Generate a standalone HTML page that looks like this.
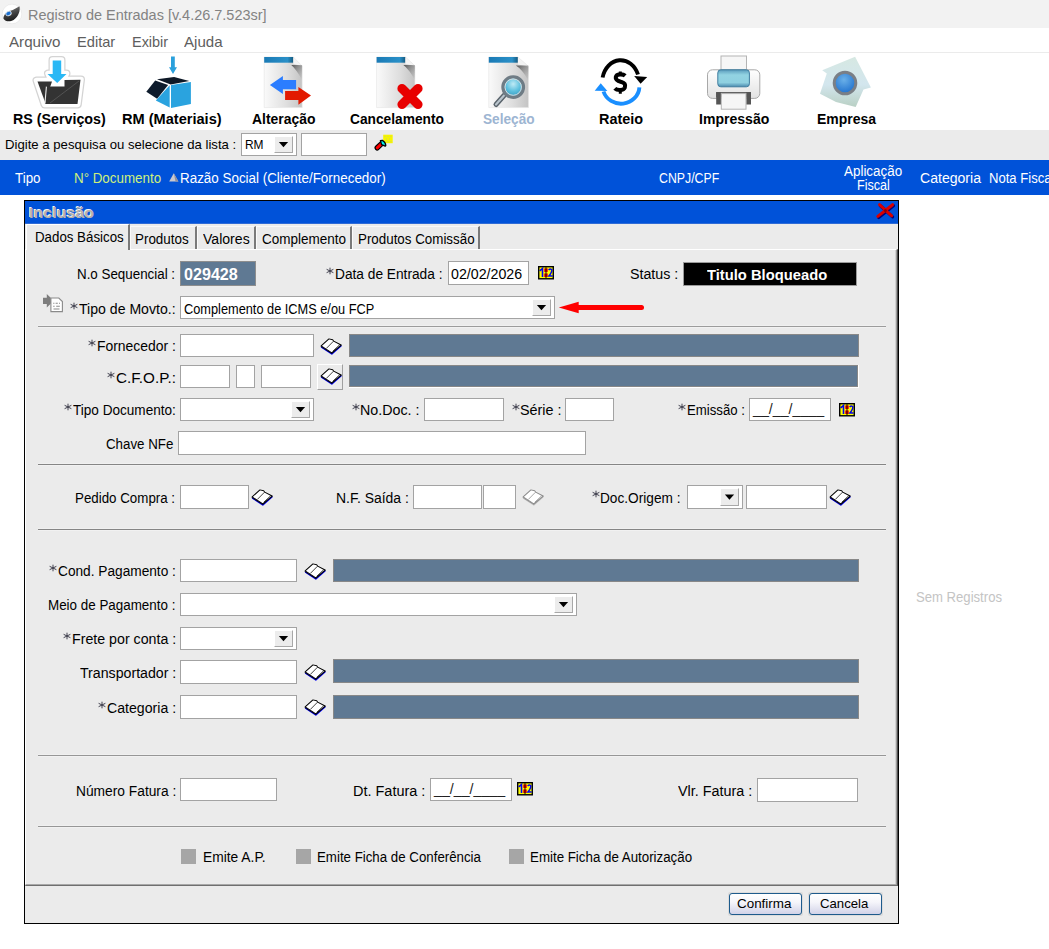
<!DOCTYPE html>
<html><head><meta charset="utf-8"><style>
html,body{margin:0;padding:0;}
body{width:1049px;height:949px;overflow:hidden;position:relative;background:#fff;font-family:'Liberation Sans', sans-serif;}
.t{position:absolute;white-space:nowrap;font-family:'Liberation Sans', sans-serif;}
svg{overflow:visible}
</style></head><body>
<div style="position:absolute;left:0px;top:0px;width:1049px;height:28px;background:#f2f2f2"></div>
<svg style="position:absolute;left:0px;top:0px" width="28" height="28" viewBox="0 0 28 28">
<defs><linearGradient id="sw" x1="0" y1="0" x2="0.3" y2="1"><stop offset="0" stop-color="#8a8a8a"/><stop offset="0.5" stop-color="#4a4a4a"/><stop offset="1" stop-color="#1e1e1e"/></linearGradient></defs>
<circle cx="12" cy="14" r="9.8" fill="#fff" stroke="#e4e4e4" stroke-width="0.6"/>
<path d="M3.4 18.4 C3.6 14.6 6.8 11.2 10.4 10.7 C13.6 10.1 16.6 7.6 19.4 6.3 C20.6 10.2 18.6 16.6 13.6 19.9 C10 22.1 5.4 21.9 3.4 18.4 Z" fill="url(#sw)"/>
<ellipse cx="8.5" cy="13.5" rx="2.8" ry="2.1" transform="rotate(-25 8.5 13.5)" fill="#1a6fd0" stroke="#dfe8f0" stroke-width="0.9"/>
</svg>
<div id="t0" class="t" style="left:27.93px;top:8.21px;font-size:14.5px;line-height:14.5px;font-weight:400;color:#838383;transform:scaleX(0.9976);transform-origin:0 0;">Registro de Entradas [v.4.26.7.523sr]</div>
<div style="position:absolute;left:0px;top:28px;width:1049px;height:24px;background:#fff"></div>
<div id="t1" class="t" style="left:8.73px;top:34.71px;font-size:14.5px;line-height:14.5px;font-weight:400;color:#5e5e5e;transform:scaleX(1.0461);transform-origin:0 0;">Arquivo</div>
<div id="t2" class="t" style="left:77.43px;top:34.71px;font-size:14.5px;line-height:14.5px;font-weight:400;color:#5e5e5e;transform:scaleX(1.0092);transform-origin:0 0;">Editar</div>
<div id="t3" class="t" style="left:132.13px;top:34.71px;font-size:14.5px;line-height:14.5px;font-weight:400;color:#5e5e5e;transform:scaleX(0.9965);transform-origin:0 0;">Exibir</div>
<div id="t4" class="t" style="left:184.43px;top:34.71px;font-size:14.5px;line-height:14.5px;font-weight:400;color:#5e5e5e;transform:scaleX(1.0390);transform-origin:0 0;">Ajuda</div>
<div style="position:absolute;left:0px;top:52px;width:1049px;height:1px;background:#ebebeb"></div>
<div style="position:absolute;left:0px;top:53px;width:1049px;height:1px;background:#f5f5f5"></div>
<div style="position:absolute;left:0px;top:53px;width:1049px;height:77px;background:#fff"></div>
<div id="t5" class="t" style="left:13.14px;top:112.01px;font-size:14.3px;line-height:14.3px;font-weight:700;color:#000;transform:scaleX(0.9973);transform-origin:0 0;">RS (Serviços)</div>
<div id="t6" class="t" style="left:122.04px;top:112.01px;font-size:14.3px;line-height:14.3px;font-weight:700;color:#000;transform:scaleX(1.0194);transform-origin:0 0;">RM (Materiais)</div>
<div id="t7" class="t" style="left:251.94px;top:112.01px;font-size:14.3px;line-height:14.3px;font-weight:700;color:#000;transform:scaleX(0.9746);transform-origin:0 0;">Alteração</div>
<div id="t8" class="t" style="left:349.74px;top:112.01px;font-size:14.3px;line-height:14.3px;font-weight:700;color:#000;transform:scaleX(0.9609);transform-origin:0 0;">Cancelamento</div>
<div id="t9" class="t" style="left:482.84px;top:112.01px;font-size:14.3px;line-height:14.3px;font-weight:700;color:#9db5d2;transform:scaleX(0.9550);transform-origin:0 0;">Seleção</div>
<div id="t10" class="t" style="left:599.04px;top:112.01px;font-size:14.3px;line-height:14.3px;font-weight:700;color:#000;transform:scaleX(1.0094);transform-origin:0 0;">Rateio</div>
<div id="t11" class="t" style="left:698.84px;top:112.01px;font-size:14.3px;line-height:14.3px;font-weight:700;color:#000;transform:scaleX(0.9830);transform-origin:0 0;">Impressão</div>
<div id="t12" class="t" style="left:816.84px;top:112.01px;font-size:14.3px;line-height:14.3px;font-weight:700;color:#000;transform:scaleX(0.9770);transform-origin:0 0;">Empresa</div>
<svg style="position:absolute;left:28px;top:52px" width="64" height="60" viewBox="0 0 64 60">
<path d="M8.5 28.5 L23 28.5 L20 21.5 L24.5 21.5 L24.5 8 L33.5 8 L33.5 21.5 L38.5 21.5 L35.5 27.5 L53 27.5 L49.8 52.5 L16.5 52.5 Z" fill="#fff" stroke="#d4d4d4" stroke-width="8" stroke-linejoin="round"/>
<path d="M8.5 28.5 L23 28.5 L20 21.5 L24.5 21.5 L24.5 8 L33.5 8 L33.5 21.5 L38.5 21.5 L35.5 27.5 L53 27.5 L49.8 52.5 L16.5 52.5 Z" fill="#fff" stroke="#fff" stroke-width="5.5" stroke-linejoin="round"/>
<polygon points="9.5,29.6 24,29.6 17,50" fill="#333"/>
<polygon points="18.3,34.5 36.5,34.5 36.5,28 52.5,27.8 49.5,52 17,52" fill="#333"/>
<line x1="18.4" y1="34.6" x2="16.9" y2="51.8" stroke="#eee" stroke-width="1.1"/>
<line x1="22" y1="51" x2="51" y2="29" stroke="#5a5a5a" stroke-width="0.8"/>
<polygon points="24.7,8.5 33.2,8.5 33.2,22 38.5,22 29.2,31 19.5,22 24.7,22" fill="#2ab8f5" stroke="#fff" stroke-width="3.2" stroke-linejoin="round"/>
<polygon points="24.7,8.5 33.2,8.5 33.2,22 38.5,22 29.2,31 19.5,22 24.7,22" fill="#2ab8f5"/>
</svg>
<svg style="position:absolute;left:140px;top:52px" width="60" height="60" viewBox="0 0 60 60">
<polygon points="31,4.4 34.8,4.4 34.8,15.2 37,15.2 33,22 29,15.2 31,15.2" fill="#2aa0dc"/>
<polygon points="17,27.2 34.1,25 49.3,29.1 30.7,32.6" fill="#0d1826"/>
<polygon points="6.3,39.8 15.2,28.4 28.1,32.9 17.1,46.8" fill="#0d1b2c"/>
<polygon points="15.8,48.4 29.7,33.2 29.7,55.6" fill="#2aa3df"/>
<polygon points="31,32.9 50.9,30 50.9,52.1 31,55.9" fill="#2aa3df"/>
</svg>
<svg style="position:absolute;left:256px;top:52px" width="60" height="60" viewBox="0 0 60 60">
<defs><linearGradient id="dg82" x1="0" x2="1" y1="0" y2="0"><stop offset="0" stop-color="#fafafa"/><stop offset="0.6" stop-color="#dedede"/><stop offset="1" stop-color="#c4c4c4"/></linearGradient>
<linearGradient id="bg82" x1="0" x2="1"><stop offset="0" stop-color="#1a7ab5"/><stop offset="0.8" stop-color="#2a90c8"/><stop offset="1" stop-color="#155a80"/></linearGradient></defs>
<path d="M8.2 5 L37.3 5 L46.1 14 L46.1 55.6 L8.2 55.6 Z" fill="url(#dg82)" stroke="#e2e2e2" stroke-width="0.6"/>
<rect x="8.2" y="5" width="29.099999999999998" height="5.7" fill="url(#bg82)"/>
<path d="M37.3 5 L46.1 14 L37.3 12 Z" fill="#f4f4f4"/>
<defs><linearGradient id="fs82" x1="0" y1="0" x2="1" y2="1"><stop offset="0" stop-color="#444" stop-opacity="0.9"/><stop offset="1" stop-color="#888" stop-opacity="0"/></linearGradient></defs>
<path d="M35.3 13 L46.1 13 L46.1 28 Q40.1 17 35.3 13 Z" fill="url(#fs82)"/>

<polygon points="13.9,32.9 26.9,24 26.9,28.1 40.1,28.1 40.1,37.3 26.9,37.3 26.9,42" fill="#2b7dff"/>
<polygon points="29.1,38.9 42.4,38.9 42.4,35.1 55,43.6 42.4,52.8 42.4,48 29.1,48" fill="#e21a00"/>
</svg>
<svg style="position:absolute;left:370px;top:52px" width="60" height="60" viewBox="0 0 60 60">
<defs><linearGradient id="dg66" x1="0" x2="1" y1="0" y2="0"><stop offset="0" stop-color="#fafafa"/><stop offset="0.6" stop-color="#dedede"/><stop offset="1" stop-color="#c4c4c4"/></linearGradient>
<linearGradient id="bg66" x1="0" x2="1"><stop offset="0" stop-color="#1a7ab5"/><stop offset="0.8" stop-color="#2a90c8"/><stop offset="1" stop-color="#155a80"/></linearGradient></defs>
<path d="M6.6 5 L35.4 5 L44.9 14 L44.9 55.6 L6.6 55.6 Z" fill="url(#dg66)" stroke="#e2e2e2" stroke-width="0.6"/>
<rect x="6.6" y="5" width="28.799999999999997" height="5.7" fill="url(#bg66)"/>
<path d="M35.4 5 L44.9 14 L35.4 12 Z" fill="#f4f4f4"/>
<defs><linearGradient id="fs66" x1="0" y1="0" x2="1" y2="1"><stop offset="0" stop-color="#444" stop-opacity="0.9"/><stop offset="1" stop-color="#888" stop-opacity="0"/></linearGradient></defs>
<path d="M33.4 13 L44.9 13 L44.9 28 Q38.9 17 33.4 13 Z" fill="url(#fs66)"/>

<path d="M32 36.6 L48 52.4 M48 36.6 L32 52.4" stroke="#e80000" stroke-width="9.2" stroke-linecap="round"/>
</svg>
<svg style="position:absolute;left:480px;top:52px" width="60" height="60" viewBox="0 0 60 60">
<defs><linearGradient id="dg88" x1="0" x2="1" y1="0" y2="0"><stop offset="0" stop-color="#fafafa"/><stop offset="0.6" stop-color="#dedede"/><stop offset="1" stop-color="#c4c4c4"/></linearGradient>
<linearGradient id="bg88" x1="0" x2="1"><stop offset="0" stop-color="#1a7ab5"/><stop offset="0.8" stop-color="#2a90c8"/><stop offset="1" stop-color="#155a80"/></linearGradient></defs>
<path d="M8.8 5 L37.9 5 L48.4 14.5 L48.4 55.6 L8.8 55.6 Z" fill="url(#dg88)" stroke="#e2e2e2" stroke-width="0.6"/>
<rect x="8.8" y="5" width="29.099999999999998" height="5.7" fill="url(#bg88)"/>
<path d="M37.9 5 L48.4 14.5 L37.9 12.5 Z" fill="#f4f4f4"/>
<defs><linearGradient id="fs88" x1="0" y1="0" x2="1" y2="1"><stop offset="0" stop-color="#444" stop-opacity="0.9"/><stop offset="1" stop-color="#888" stop-opacity="0"/></linearGradient></defs>
<path d="M35.9 13.5 L48.4 13.5 L48.4 28.5 Q42.4 17.5 35.9 13.5 Z" fill="url(#fs88)"/>

<defs><radialGradient id="lens" cx="0.5" cy="0.35" r="0.7"><stop offset="0" stop-color="#bfeaf5"/><stop offset="0.5" stop-color="#5cc0de"/><stop offset="1" stop-color="#2f8fb5"/></radialGradient></defs>
<line x1="24" y1="43.5" x2="16" y2="52.5" stroke="#59636b" stroke-width="5" stroke-linecap="round"/>
<line x1="24" y1="43.5" x2="16" y2="52.5" stroke="#b9c4cc" stroke-width="2.2" stroke-linecap="round"/>
<circle cx="33.2" cy="35.1" r="10.3" fill="url(#lens)" stroke="#6f7c85" stroke-width="3.2"/>
<circle cx="33.2" cy="35.1" r="8.2" fill="none" stroke="#d8dde0" stroke-width="1"/>
</svg>
<svg style="position:absolute;left:590px;top:52px" width="60" height="60" viewBox="0 0 60 60">
<path d="M12.6 25.5 A18.5 22 0 0 1 48 22.5" fill="none" stroke="#000" stroke-width="3.9"/>
<polygon points="44.2,23.9 57.2,25 50.6,31.8" fill="#000"/>
<path d="M49.4 35.3 A18.4 17.5 0 0 1 13.5 39.5" fill="none" stroke="#1a8fff" stroke-width="3.9"/>
<polygon points="4.7,38.7 17.4,38.9 10.7,31.3" fill="#1a8fff"/>
<path d="M35.2 23.8 C33 21.8 26.5 21.6 25.8 25.2 C25.2 28.6 29.5 29.5 31.5 30 C34.5 30.8 35.8 32.5 34.8 35.6 C33.6 38.8 27 38.6 24.8 36.3" fill="none" stroke="#000" stroke-width="4.1"/>
<path d="M30.3 19.6 V23 M30.3 37.5 V41.7" stroke="#000" stroke-width="3"/>
</svg>
<svg style="position:absolute;left:702px;top:52px" width="60" height="60" viewBox="0 0 60 60">
<defs><linearGradient id="pb" x1="0" x2="0" y1="0" y2="1"><stop offset="0" stop-color="#fff"/><stop offset="1" stop-color="#e2e2e2"/></linearGradient>
<linearGradient id="pp" x1="0" x2="0" y1="0" y2="1"><stop offset="0" stop-color="#5a9cbc"/><stop offset="0.3" stop-color="#92d3e2"/><stop offset="0.75" stop-color="#8fd0e0"/><stop offset="1" stop-color="#4a8aae"/></linearGradient></defs>
<rect x="19" y="4" width="25.5" height="15" fill="#f6f6f6" stroke="#b4b4b4" stroke-width="1"/>
<rect x="5.5" y="17.8" width="52.3" height="28.6" rx="5" fill="url(#pb)" stroke="#a8a8a8" stroke-width="1"/>
<rect x="15.8" y="17.8" width="31.6" height="17" rx="3" fill="url(#pp)" stroke="#3f7d9f" stroke-width="1"/>
<rect x="14.2" y="40.1" width="34.8" height="5.2" fill="#555"/>
<rect x="14.2" y="40.1" width="4.8" height="12.4" fill="#555"/>
<rect x="44.2" y="40.1" width="4.8" height="12.4" fill="#555"/>
<rect x="19.3" y="41.6" width="24.7" height="15.6" fill="#f6f6f6" stroke="#b4b4b4" stroke-width="1"/>
</svg>
<svg style="position:absolute;left:814px;top:52px" width="60" height="60" viewBox="0 0 60 60">
<defs><linearGradient id="hs" x1="0" x2="0" y1="0" y2="1"><stop offset="0" stop-color="#d6e8e2"/><stop offset="0.55" stop-color="#d3e6ee"/><stop offset="1" stop-color="#b9d0c4"/></linearGradient>
<radialGradient id="eb" cx="0.45" cy="0.35" r="0.7"><stop offset="0" stop-color="#6ab0e8"/><stop offset="1" stop-color="#1a6ccc"/></radialGradient></defs>
<polygon points="8.2,18.3 41.1,4.7 56.9,35.4 49.5,37.5 41.7,55 22,50 6,41.7 12.8,21.5" fill="url(#hs)"/>
<circle cx="31" cy="31" r="10.8" fill="url(#eb)" stroke="#7a7f86" stroke-width="3"/>
</svg>
<div style="position:absolute;left:0px;top:130px;width:1049px;height:30px;background:#ebebeb"></div>
<div id="t13" class="t" style="left:4.69px;top:137.82px;font-size:13.5px;line-height:13.5px;font-weight:400;color:#000;transform:scaleX(0.9750);transform-origin:0 0;">Digite a pesquisa ou selecione da lista :</div>
<div style="position:absolute;left:241px;top:133px;width:56px;height:23px;background:#fff;border:1px solid #a3a3a3;box-sizing:border-box"></div>
<div style="position:absolute;left:274px;top:136px;width:19px;height:17px;background:#ececec;border-top:1px solid #fff;border-left:1px solid #fff;border-right:1px solid #a8a8a8;border-bottom:1px solid #a8a8a8;box-sizing:border-box"></div>
<svg style="position:absolute;left:274px;top:136px" width="19" height="17" viewBox="0 0 19 17"><polygon points="4.9,5.9 14.1,5.9 9.5,11.3" fill="#000"/></svg>
<div id="t14" class="t" style="left:245.22px;top:138.07px;font-size:13px;line-height:13px;font-weight:400;color:#000;transform:scaleX(0.9180);transform-origin:0 0;">RM</div>
<div style="position:absolute;left:301px;top:133px;width:66px;height:23px;background:#fff;border:1px solid #a3a3a3;box-sizing:border-box"></div>
<svg style="position:absolute;left:370px;top:130px" width="25" height="25" viewBox="0 0 25 25">
<rect x="13.2" y="4.7" width="9.5" height="8.5" fill="#f5f500"/>
<path d="M14.5 6.5 h1 M17.5 6.5 h1 M20.5 6.5 h1 M16 9 h1 M19 9 h1 M14.5 11.5 h1 M17.5 11.5 h1 M20.5 11.5 h1" stroke="#c8c870" stroke-width="0.8"/>
<path d="M7.2 17.8 L11.6 13.6" stroke="#000" stroke-width="5.4" stroke-linecap="round"/>
<path d="M7.2 17.8 L11.6 13.6" stroke="#ff0000" stroke-width="3" stroke-linecap="round"/>
<path d="M10.4 10.6 L12.4 10.3 Q15.6 12.4 15.8 15.6 L15.2 16.2 L11.6 14.6 Z" fill="#00f0f0" stroke="#000" stroke-width="1.3" stroke-linejoin="round"/>
</svg>
<div style="position:absolute;left:0px;top:160px;width:1049px;height:35px;background:#0052d9"></div>
<div id="t15" class="t" style="left:15.36px;top:170.87px;font-size:14px;line-height:14px;font-weight:400;color:#fff;transform:scaleX(0.9536);transform-origin:0 0;">Tipo</div>
<div id="t16" class="t" style="left:73.56px;top:170.87px;font-size:14px;line-height:14px;font-weight:400;color:#cdf07c;transform:scaleX(0.9548);transform-origin:0 0;">N° Documento</div>
<svg style="position:absolute;left:168px;top:171px" width="12" height="12" viewBox="0 0 12 12"><polygon points="1.2,10.6 10.4,10.6 5.8,2.2" fill="#c8c8d0"/><polygon points="5.8,2.2 10.4,10.6 7.5,10.6" fill="#9090a0"/></svg>
<div id="t17" class="t" style="left:180.16px;top:170.87px;font-size:14px;line-height:14px;font-weight:400;color:#fff;transform:scaleX(0.9577);transform-origin:0 0;">Razão Social (Cliente/Fornecedor)</div>
<div id="t18" class="t" style="left:658.66px;top:170.87px;font-size:14px;line-height:14px;font-weight:400;color:#fff;transform:scaleX(0.8791);transform-origin:0 0;">CNPJ/CPF</div>
<div id="t19" class="t" style="left:843.86px;top:163.77px;font-size:14px;line-height:14px;font-weight:400;color:#fff;transform:scaleX(0.9584);transform-origin:0 0;">Aplicação</div>
<div id="t20" class="t" style="left:857.46px;top:177.56px;font-size:14px;line-height:14px;font-weight:400;color:#fff;transform:scaleX(0.8993);transform-origin:0 0;">Fiscal</div>
<div id="t21" class="t" style="left:919.86px;top:170.87px;font-size:14px;line-height:14px;font-weight:400;color:#fff;transform:scaleX(1.0046);transform-origin:0 0;">Categoria</div>
<div id="t22" class="t" style="left:989.16px;top:170.87px;font-size:14px;line-height:14px;font-weight:400;color:#fff;transform:scaleX(0.935);transform-origin:0 0;">Nota Fiscal</div>
<div id="t23" class="t" style="left:915.96px;top:590.37px;font-size:14px;line-height:14px;font-weight:400;color:#c4c4c4;transform:scaleX(0.9365);transform-origin:0 0;">Sem Registros</div>
<div style="position:absolute;left:24px;top:200px;width:875px;height:724px;background:#ebebeb;border:1px solid #000;box-sizing:border-box"></div>
<div style="position:absolute;left:25px;top:201px;width:873px;height:23px;background:#0052d9"></div>
<div style="position:absolute;left:25px;top:223px;width:873px;height:1px;background:#2f6bd6"></div>
<div id="t24" class="t" style="left:28.57px;top:204.51px;font-size:15.5px;line-height:15.5px;font-weight:700;color:#b9b1aa;transform:scaleX(1.0361);transform-origin:0 0;text-shadow:-1px -1px 0 #f4f4f4;">Inclusão</div>
<svg style="position:absolute;left:874px;top:202px" width="22" height="18" viewBox="0 0 22 18">
<path d="M3.8 14.4 L18.6 2.7 M5.5 2.7 L17.7 13.8" stroke="#00007a" stroke-width="3.2" stroke-linecap="round" transform="translate(0.9,1.1)"/>
<path d="M3.8 14.4 L18.6 2.7 M5.5 2.7 L17.7 13.8" stroke="#d80000" stroke-width="3" stroke-linecap="round"/>
<circle cx="11.4" cy="8.6" r="1.6" fill="#900000"/>
</svg>
<div style="position:absolute;left:25px;top:224px;width:873px;height:25px;background:#ebebeb"></div>
<div style="position:absolute;left:25px;top:249px;width:873px;height:637px;background:#ebebeb;border-top:1px solid #fff;border-left:1px solid #fff;border-right:2px solid #505050;border-bottom:2px solid #6f6f6f;box-sizing:border-box"></div>
<div style="position:absolute;left:896px;top:250px;width:1px;height:635px;background:#9a9a9a"></div>
<div style="position:absolute;left:895px;top:250px;width:1px;height:634px;background:#d2d2d2"></div>
<div style="position:absolute;left:26px;top:884px;width:870px;height:1px;background:#a8a8a8"></div>
<div style="position:absolute;left:26px;top:224px;width:104px;height:26px;background:#ebebeb;border-top:1px solid #fff;border-left:1px solid #fff;border-right:2px solid #7a7a7a;box-sizing:border-box"></div>
<div id="t25" class="t" style="left:34.56px;top:229.97px;font-size:14px;line-height:14px;font-weight:400;color:#000;transform:scaleX(0.9496);transform-origin:0 0;">Dados Básicos</div>
<div style="position:absolute;left:130px;top:226px;width:67px;height:23px;background:#ebebeb;border-top:1px solid #f8f8f8;border-left:1px solid #fafafa;border-right:2px solid #7a7a7a;box-sizing:border-box"></div>
<div style="position:absolute;left:197px;top:226px;width:59px;height:23px;background:#ebebeb;border-top:1px solid #f8f8f8;border-left:1px solid #fafafa;border-right:2px solid #7a7a7a;box-sizing:border-box"></div>
<div style="position:absolute;left:256px;top:226px;width:96px;height:23px;background:#ebebeb;border-top:1px solid #f8f8f8;border-left:1px solid #fafafa;border-right:2px solid #7a7a7a;box-sizing:border-box"></div>
<div style="position:absolute;left:352px;top:226px;width:128px;height:23px;background:#ebebeb;border-top:1px solid #f8f8f8;border-left:1px solid #fafafa;border-right:2px solid #7a7a7a;box-sizing:border-box"></div>
<div id="t26" class="t" style="left:135.36px;top:232.16px;font-size:14px;line-height:14px;font-weight:400;color:#000;transform:scaleX(0.9578);transform-origin:0 0;">Produtos</div>
<div id="t27" class="t" style="left:202.86px;top:232.16px;font-size:14px;line-height:14px;font-weight:400;color:#000;transform:scaleX(1.0052);transform-origin:0 0;">Valores</div>
<div id="t28" class="t" style="left:261.76px;top:232.16px;font-size:14px;line-height:14px;font-weight:400;color:#000;transform:scaleX(0.9636);transform-origin:0 0;">Complemento</div>
<div id="t29" class="t" style="left:358.36px;top:232.16px;font-size:14px;line-height:14px;font-weight:400;color:#000;transform:scaleX(0.9542);transform-origin:0 0;">Produtos Comissão</div>
<div style="position:absolute;left:38px;top:325px;width:848px;height:1px;background:#f0f0f0"></div>
<div style="position:absolute;left:38px;top:326px;width:848px;height:1px;background:#9c9c9c"></div>
<div style="position:absolute;left:38px;top:327px;width:848px;height:1px;background:#f1f1f1"></div>
<div style="position:absolute;left:38px;top:463px;width:848px;height:1px;background:#f0f0f0"></div>
<div style="position:absolute;left:38px;top:464px;width:848px;height:1px;background:#858585"></div>
<div style="position:absolute;left:38px;top:465px;width:848px;height:1px;background:#f1f1f1"></div>
<div style="position:absolute;left:38px;top:528px;width:848px;height:1px;background:#f0f0f0"></div>
<div style="position:absolute;left:38px;top:529px;width:848px;height:1px;background:#858585"></div>
<div style="position:absolute;left:38px;top:530px;width:848px;height:1px;background:#f1f1f1"></div>
<div style="position:absolute;left:38px;top:754px;width:848px;height:1px;background:#f0f0f0"></div>
<div style="position:absolute;left:38px;top:755px;width:848px;height:1px;background:#969696"></div>
<div style="position:absolute;left:38px;top:756px;width:848px;height:1px;background:#f1f1f1"></div>
<div style="position:absolute;left:38px;top:825px;width:848px;height:1px;background:#f0f0f0"></div>
<div style="position:absolute;left:38px;top:826px;width:848px;height:1px;background:#969696"></div>
<div style="position:absolute;left:38px;top:827px;width:848px;height:1px;background:#f1f1f1"></div>
<div id="t30" class="t" style="left:77.16px;top:266.86px;font-size:14px;line-height:14px;font-weight:400;color:#000;transform:scaleX(0.9547);transform-origin:0 0;">N.o Sequencial :</div>
<div style="position:absolute;left:180px;top:261px;width:76px;height:25px;background:#5f7993;border:1px solid #8e8e8e;box-sizing:border-box"></div>
<div id="t31" class="t" style="left:183.81px;top:265.71px;font-size:16.5px;line-height:16.5px;font-weight:700;color:#fff;transform:scaleX(0.9767);transform-origin:0 0;">029428</div>
<svg style="position:absolute;left:324.80px;top:265.50px" width="10" height="10" viewBox="-5 -5 10 10"><path d="M0 -3.3 V3.3 M-3.4 -1.7 L3.4 1.7 M-3.4 1.7 L3.4 -1.7" stroke="#303040" stroke-width="0.9"/></svg>
<div id="t32" class="t" style="left:334.96px;top:266.86px;font-size:14px;line-height:14px;font-weight:400;color:#000;transform:scaleX(0.9793);transform-origin:0 0;">Data de Entrada :</div>
<div style="position:absolute;left:448px;top:261px;width:81px;height:24px;background:#fff;border:1px solid #a3a3a3;box-sizing:border-box"></div>
<div id="t33" class="t" style="left:451.16px;top:266.96px;font-size:14px;line-height:14px;font-weight:400;color:#000;transform:scaleX(1.0157);transform-origin:0 0;">02/02/2026</div>
<svg style="position:absolute;left:538px;top:266px" width="17" height="14" viewBox="0 0 17 14"><g transform="scale(0.94,0.93)">
<rect x="0.75" y="0.75" width="15.5" height="13" fill="#ffff00" stroke="#000" stroke-width="1.5"/>
<path d="M1.8 5.2 L4.8 2.6 L4.8 11.8" stroke="#0000ee" stroke-width="1.7" fill="none"/>
<rect x="6.6" y="2.6" width="3.8" height="3.8" fill="#f00"/><rect x="6.6" y="8" width="3.8" height="3.8" fill="#f00"/>
<line x1="8.5" y1="1.2" x2="8.5" y2="13.2" stroke="#000" stroke-width="1"/>
<path d="M11.3 4.4 Q12.8 2.6 14.6 3.8 Q15.4 6 11.6 10.8 L15.6 10.8" stroke="#0000ee" stroke-width="1.6" fill="none"/>
</g></svg>
<div id="t34" class="t" style="left:629.86px;top:266.86px;font-size:14px;line-height:14px;font-weight:400;color:#000;transform:scaleX(1.0171);transform-origin:0 0;">Status :</div>
<div style="position:absolute;left:683px;top:262px;width:174px;height:24px;background:#000;border:1px solid #9a9a9a;box-sizing:border-box"></div>
<div id="t35" class="t" style="left:706.57px;top:266.81px;font-size:15.5px;line-height:15.5px;font-weight:700;color:#fff;transform:scaleX(0.9514);transform-origin:0 0;">Titulo Bloqueado</div>
<svg style="position:absolute;left:36px;top:288px" width="30" height="28" viewBox="0 0 30 28">
<polygon points="7,9.7 10.8,9.7 10.8,6 17.8,12.7 10.8,19.4 10.8,15.9 7,15.9" fill="#7d7d7d"/>
<path d="M14.9 10 L22.8 10 L26.4 13.6 L26.4 23.6 L14.9 23.6 Z" fill="#fff" stroke="#8a8a8a" stroke-width="1.1"/>
<path d="M17.2 15.2 h1.2 M19.6 15.2 h2.2 M23 15.2 h1 M17.2 18.2 h1.4 M20.2 18.2 h3.6 M17.5 21 h6" stroke="#8a8a8a" stroke-width="1.1"/>
</svg>
<svg style="position:absolute;left:68.80px;top:300.70px" width="10" height="10" viewBox="-5 -5 10 10"><path d="M0 -3.3 V3.3 M-3.4 -1.7 L3.4 1.7 M-3.4 1.7 L3.4 -1.7" stroke="#303040" stroke-width="0.9"/></svg>
<div id="t36" class="t" style="left:78.66px;top:301.96px;font-size:14px;line-height:14px;font-weight:400;color:#000;transform:scaleX(1.0062);transform-origin:0 0;">Tipo de Movto.:</div>
<div style="position:absolute;left:180px;top:296px;width:375px;height:23px;background:#fff;border:1px solid #a3a3a3;box-sizing:border-box"></div>
<div style="position:absolute;left:532px;top:299px;width:19px;height:17px;background:#ececec;border-top:1px solid #fff;border-left:1px solid #fff;border-right:1px solid #a8a8a8;border-bottom:1px solid #a8a8a8;box-sizing:border-box"></div>
<svg style="position:absolute;left:532px;top:299px" width="19" height="17" viewBox="0 0 19 17"><polygon points="4.9,5.9 14.1,5.9 9.5,11.3" fill="#000"/></svg>
<div id="t37" class="t" style="left:183.66px;top:301.96px;font-size:14px;line-height:14px;font-weight:400;color:#000;transform:scaleX(0.9120);transform-origin:0 0;">Complemento de ICMS e/ou FCP</div>
<svg style="position:absolute;left:556px;top:299px" width="92" height="17" viewBox="0 0 92 17">
<polygon points="2.8,8.5 22.7,2.7 22.7,14.3" fill="#ff0000"/>
<line x1="20" y1="8.5" x2="85.5" y2="8.5" stroke="#ff0000" stroke-width="5" stroke-linecap="round"/>
</svg>
<svg style="position:absolute;left:87.30px;top:338.10px" width="10" height="10" viewBox="-5 -5 10 10"><path d="M0 -3.3 V3.3 M-3.4 -1.7 L3.4 1.7 M-3.4 1.7 L3.4 -1.7" stroke="#303040" stroke-width="0.9"/></svg>
<div id="t38" class="t" style="left:96.66px;top:339.46px;font-size:14px;line-height:14px;font-weight:400;color:#000;transform:scaleX(0.9938);transform-origin:0 0;">Fornecedor :</div>
<div style="position:absolute;left:180px;top:334px;width:134px;height:23px;background:#fff;border:1px solid #a3a3a3;box-sizing:border-box"></div>
<svg style="position:absolute;left:320px;top:338px" width="22" height="18" viewBox="0 0 22 18"><g transform="scale(0.96,0.9)">
<path d="M1.3 9.9 L12.3 17.6 L22.3 8.3" stroke="#0000ff" stroke-width="1.7" fill="none" stroke-linejoin="round"/>
<path d="M1.2 8.8 L9.3 1 L13.2 1.9 L14.2 3.4 L22 7.8 L12.3 16.6 Z" fill="#fff" stroke="#000" stroke-width="1.05" stroke-linejoin="round"/>
<path d="M14 3.6 L6.6 11.6 M13.2 14.8 L20.6 7.4" stroke="#000" stroke-width="0.8" fill="none"/>
<path d="M1.2 8.8 L1.3 9.9 L12.3 17.3 L22.2 8.3 L22 7.8" stroke="#000" stroke-width="0.8" fill="none"/>
</g></svg>
<div style="position:absolute;left:349px;top:334px;width:510px;height:23px;background:#5f7993;border:1px solid #888;box-sizing:border-box"></div>
<svg style="position:absolute;left:106.00px;top:369.50px" width="10" height="10" viewBox="-5 -5 10 10"><path d="M0 -3.3 V3.3 M-3.4 -1.7 L3.4 1.7 M-3.4 1.7 L3.4 -1.7" stroke="#303040" stroke-width="0.9"/></svg>
<div id="t39" class="t" style="left:115.66px;top:370.96px;font-size:14px;line-height:14px;font-weight:400;color:#000;transform:scaleX(1.0890);transform-origin:0 0;">C.F.O.P.:</div>
<div style="position:absolute;left:180px;top:365px;width:50px;height:23px;background:#fff;border:1px solid #a3a3a3;box-sizing:border-box"></div>
<div style="position:absolute;left:236px;top:365px;width:19px;height:23px;background:#fff;border:1px solid #a3a3a3;box-sizing:border-box"></div>
<div style="position:absolute;left:261px;top:365px;width:50px;height:23px;background:#fff;border:1px solid #a3a3a3;box-sizing:border-box"></div>
<div style="position:absolute;left:317px;top:364px;width:26px;height:26px;background:#ebebeb;border-top:1px solid #fff;border-left:1px solid #fff;border-right:1px solid #a0a0a0;border-bottom:1px solid #a0a0a0;box-sizing:border-box"></div>
<svg style="position:absolute;left:320px;top:368px" width="22" height="18" viewBox="0 0 22 18"><g transform="scale(0.96,0.9)">
<path d="M1.3 9.9 L12.3 17.6 L22.3 8.3" stroke="#0000ff" stroke-width="1.7" fill="none" stroke-linejoin="round"/>
<path d="M1.2 8.8 L9.3 1 L13.2 1.9 L14.2 3.4 L22 7.8 L12.3 16.6 Z" fill="#fff" stroke="#000" stroke-width="1.05" stroke-linejoin="round"/>
<path d="M14 3.6 L6.6 11.6 M13.2 14.8 L20.6 7.4" stroke="#000" stroke-width="0.8" fill="none"/>
<path d="M1.2 8.8 L1.3 9.9 L12.3 17.3 L22.2 8.3 L22 7.8" stroke="#000" stroke-width="0.8" fill="none"/>
</g></svg>
<div style="position:absolute;left:349px;top:365px;width:510px;height:23px;background:#fff"></div>
<div style="position:absolute;left:349px;top:365px;width:509px;height:22px;background:#5f7993;border:1px solid #888;box-sizing:border-box"></div>
<svg style="position:absolute;left:63.00px;top:402.00px" width="10" height="10" viewBox="-5 -5 10 10"><path d="M0 -3.3 V3.3 M-3.4 -1.7 L3.4 1.7 M-3.4 1.7 L3.4 -1.7" stroke="#303040" stroke-width="0.9"/></svg>
<div id="t40" class="t" style="left:72.66px;top:403.46px;font-size:14px;line-height:14px;font-weight:400;color:#000;transform:scaleX(0.9697);transform-origin:0 0;">Tipo Documento:</div>
<div style="position:absolute;left:180px;top:398px;width:134px;height:23px;background:#fff;border:1px solid #a3a3a3;box-sizing:border-box"></div>
<div style="position:absolute;left:291px;top:401px;width:19px;height:17px;background:#ececec;border-top:1px solid #fff;border-left:1px solid #fff;border-right:1px solid #a8a8a8;border-bottom:1px solid #a8a8a8;box-sizing:border-box"></div>
<svg style="position:absolute;left:291px;top:401px" width="19" height="17" viewBox="0 0 19 17"><polygon points="4.9,5.9 14.1,5.9 9.5,11.3" fill="#000"/></svg>
<svg style="position:absolute;left:350.50px;top:402.00px" width="10" height="10" viewBox="-5 -5 10 10"><path d="M0 -3.3 V3.3 M-3.4 -1.7 L3.4 1.7 M-3.4 1.7 L3.4 -1.7" stroke="#303040" stroke-width="0.9"/></svg>
<div id="t41" class="t" style="left:360.16px;top:403.46px;font-size:14px;line-height:14px;font-weight:400;color:#000;transform:scaleX(1.0175);transform-origin:0 0;">No.Doc. :</div>
<div style="position:absolute;left:424px;top:398px;width:80px;height:23px;background:#fff;border:1px solid #a3a3a3;box-sizing:border-box"></div>
<svg style="position:absolute;left:510.60px;top:402.00px" width="10" height="10" viewBox="-5 -5 10 10"><path d="M0 -3.3 V3.3 M-3.4 -1.7 L3.4 1.7 M-3.4 1.7 L3.4 -1.7" stroke="#303040" stroke-width="0.9"/></svg>
<div id="t42" class="t" style="left:520.16px;top:403.46px;font-size:14px;line-height:14px;font-weight:400;color:#000;transform:scaleX(1.0250);transform-origin:0 0;">Série :</div>
<div style="position:absolute;left:565px;top:398px;width:49px;height:23px;background:#fff;border:1px solid #a3a3a3;box-sizing:border-box"></div>
<svg style="position:absolute;left:677.20px;top:402.00px" width="10" height="10" viewBox="-5 -5 10 10"><path d="M0 -3.3 V3.3 M-3.4 -1.7 L3.4 1.7 M-3.4 1.7 L3.4 -1.7" stroke="#303040" stroke-width="0.9"/></svg>
<div id="t43" class="t" style="left:686.66px;top:403.46px;font-size:14px;line-height:14px;font-weight:400;color:#000;transform:scaleX(0.9432);transform-origin:0 0;">Emissão :</div>
<div style="position:absolute;left:749px;top:398px;width:82px;height:23px;background:#fff;border:1px solid #a3a3a3;box-sizing:border-box"></div>
<div id="t44" class="t" style="left:752.66px;top:401.76px;font-size:14px;line-height:14px;font-weight:400;color:#222;transform:scaleX(1.0157);transform-origin:0 0;">__/__/____</div>
<svg style="position:absolute;left:839px;top:403px" width="17" height="14" viewBox="0 0 17 14"><g transform="scale(0.94,0.93)">
<rect x="0.75" y="0.75" width="15.5" height="13" fill="#ffff00" stroke="#000" stroke-width="1.5"/>
<path d="M1.8 5.2 L4.8 2.6 L4.8 11.8" stroke="#0000ee" stroke-width="1.7" fill="none"/>
<rect x="6.6" y="2.6" width="3.8" height="3.8" fill="#f00"/><rect x="6.6" y="8" width="3.8" height="3.8" fill="#f00"/>
<line x1="8.5" y1="1.2" x2="8.5" y2="13.2" stroke="#000" stroke-width="1"/>
<path d="M11.3 4.4 Q12.8 2.6 14.6 3.8 Q15.4 6 11.6 10.8 L15.6 10.8" stroke="#0000ee" stroke-width="1.6" fill="none"/>
</g></svg>
<div id="t45" class="t" style="left:106.16px;top:436.96px;font-size:14px;line-height:14px;font-weight:400;color:#000;transform:scaleX(0.9515);transform-origin:0 0;">Chave NFe</div>
<div style="position:absolute;left:178px;top:431px;width:408px;height:24px;background:#fff;border:1px solid #a3a3a3;box-sizing:border-box"></div>
<div id="t46" class="t" style="left:75.46px;top:490.66px;font-size:14px;line-height:14px;font-weight:400;color:#000;transform:scaleX(0.9526);transform-origin:0 0;">Pedido Compra :</div>
<div style="position:absolute;left:180px;top:485px;width:69px;height:24px;background:#fff;border:1px solid #a3a3a3;box-sizing:border-box"></div>
<svg style="position:absolute;left:251px;top:489px" width="22" height="18" viewBox="0 0 22 18"><g transform="scale(0.96,0.9)">
<path d="M1.3 9.9 L12.3 17.6 L22.3 8.3" stroke="#0000ff" stroke-width="1.7" fill="none" stroke-linejoin="round"/>
<path d="M1.2 8.8 L9.3 1 L13.2 1.9 L14.2 3.4 L22 7.8 L12.3 16.6 Z" fill="#fff" stroke="#000" stroke-width="1.05" stroke-linejoin="round"/>
<path d="M14 3.6 L6.6 11.6 M13.2 14.8 L20.6 7.4" stroke="#000" stroke-width="0.8" fill="none"/>
<path d="M1.2 8.8 L1.3 9.9 L12.3 17.3 L22.2 8.3 L22 7.8" stroke="#000" stroke-width="0.8" fill="none"/>
</g></svg>
<div id="t47" class="t" style="left:335.76px;top:490.66px;font-size:14px;line-height:14px;font-weight:400;color:#000;transform:scaleX(0.9962);transform-origin:0 0;">N.F. Saída :</div>
<div style="position:absolute;left:413px;top:485px;width:69px;height:24px;background:#fff;border:1px solid #a3a3a3;box-sizing:border-box"></div>
<div style="position:absolute;left:483px;top:485px;width:33px;height:24px;background:#fff;border:1px solid #a3a3a3;box-sizing:border-box"></div>
<svg style="position:absolute;left:522px;top:489px" width="22" height="18" viewBox="0 0 22 18"><g transform="scale(0.96,0.9)">
<path d="M1.3 9.9 L12.3 17.6 L22.3 8.3" stroke="#d0d0d0" stroke-width="1.7" fill="none" stroke-linejoin="round"/>
<path d="M1.2 8.8 L9.3 1 L13.2 1.9 L14.2 3.4 L22 7.8 L12.3 16.6 Z" fill="#fff" stroke="#8a8a8a" stroke-width="1.05" stroke-linejoin="round"/>
<path d="M14 3.6 L6.6 11.6 M13.2 14.8 L20.6 7.4" stroke="#8a8a8a" stroke-width="0.8" fill="none"/>
<path d="M1.2 8.8 L1.3 9.9 L12.3 17.3 L22.2 8.3 L22 7.8" stroke="#8a8a8a" stroke-width="0.8" fill="none"/>
</g></svg>
<svg style="position:absolute;left:590.60px;top:489.20px" width="10" height="10" viewBox="-5 -5 10 10"><path d="M0 -3.3 V3.3 M-3.4 -1.7 L3.4 1.7 M-3.4 1.7 L3.4 -1.7" stroke="#303040" stroke-width="0.9"/></svg>
<div id="t48" class="t" style="left:600.36px;top:490.66px;font-size:14px;line-height:14px;font-weight:400;color:#000;transform:scaleX(0.9759);transform-origin:0 0;">Doc.Origem :</div>
<div style="position:absolute;left:687px;top:485px;width:56px;height:24px;background:#fff;border:1px solid #a3a3a3;box-sizing:border-box"></div>
<div style="position:absolute;left:720px;top:488px;width:19px;height:18px;background:#ececec;border-top:1px solid #fff;border-left:1px solid #fff;border-right:1px solid #a8a8a8;border-bottom:1px solid #a8a8a8;box-sizing:border-box"></div>
<svg style="position:absolute;left:720px;top:488px" width="19" height="18" viewBox="0 0 19 18"><polygon points="4.9,6.4 14.1,6.4 9.5,11.8" fill="#000"/></svg>
<div style="position:absolute;left:746px;top:485px;width:81px;height:24px;background:#fff;border:1px solid #a3a3a3;box-sizing:border-box"></div>
<svg style="position:absolute;left:829px;top:489px" width="22" height="18" viewBox="0 0 22 18"><g transform="scale(0.96,0.9)">
<path d="M1.3 9.9 L12.3 17.6 L22.3 8.3" stroke="#0000ff" stroke-width="1.7" fill="none" stroke-linejoin="round"/>
<path d="M1.2 8.8 L9.3 1 L13.2 1.9 L14.2 3.4 L22 7.8 L12.3 16.6 Z" fill="#fff" stroke="#000" stroke-width="1.05" stroke-linejoin="round"/>
<path d="M14 3.6 L6.6 11.6 M13.2 14.8 L20.6 7.4" stroke="#000" stroke-width="0.8" fill="none"/>
<path d="M1.2 8.8 L1.3 9.9 L12.3 17.3 L22.2 8.3 L22 7.8" stroke="#000" stroke-width="0.8" fill="none"/>
</g></svg>
<svg style="position:absolute;left:48.30px;top:563.00px" width="10" height="10" viewBox="-5 -5 10 10"><path d="M0 -3.3 V3.3 M-3.4 -1.7 L3.4 1.7 M-3.4 1.7 L3.4 -1.7" stroke="#303040" stroke-width="0.9"/></svg>
<div id="t49" class="t" style="left:57.96px;top:564.47px;font-size:14px;line-height:14px;font-weight:400;color:#000;transform:scaleX(0.9771);transform-origin:0 0;">Cond. Pagamento :</div>
<div style="position:absolute;left:180px;top:559px;width:117px;height:23px;background:#fff;border:1px solid #a3a3a3;box-sizing:border-box"></div>
<svg style="position:absolute;left:304px;top:563px" width="22" height="18" viewBox="0 0 22 18"><g transform="scale(0.96,0.9)">
<path d="M1.3 9.9 L12.3 17.6 L22.3 8.3" stroke="#0000ff" stroke-width="1.7" fill="none" stroke-linejoin="round"/>
<path d="M1.2 8.8 L9.3 1 L13.2 1.9 L14.2 3.4 L22 7.8 L12.3 16.6 Z" fill="#fff" stroke="#000" stroke-width="1.05" stroke-linejoin="round"/>
<path d="M14 3.6 L6.6 11.6 M13.2 14.8 L20.6 7.4" stroke="#000" stroke-width="0.8" fill="none"/>
<path d="M1.2 8.8 L1.3 9.9 L12.3 17.3 L22.2 8.3 L22 7.8" stroke="#000" stroke-width="0.8" fill="none"/>
</g></svg>
<div style="position:absolute;left:333px;top:559px;width:526px;height:23px;background:#5f7993;border:1px solid #888;box-sizing:border-box"></div>
<div id="t50" class="t" style="left:48.46px;top:598.26px;font-size:14px;line-height:14px;font-weight:400;color:#000;transform:scaleX(0.9571);transform-origin:0 0;">Meio de Pagamento :</div>
<div style="position:absolute;left:180px;top:593px;width:397px;height:23px;background:#fff;border:1px solid #a3a3a3;box-sizing:border-box"></div>
<div style="position:absolute;left:554px;top:596px;width:19px;height:17px;background:#ececec;border-top:1px solid #fff;border-left:1px solid #fff;border-right:1px solid #a8a8a8;border-bottom:1px solid #a8a8a8;box-sizing:border-box"></div>
<svg style="position:absolute;left:554px;top:596px" width="19" height="17" viewBox="0 0 19 17"><polygon points="4.9,5.9 14.1,5.9 9.5,11.3" fill="#000"/></svg>
<svg style="position:absolute;left:62.00px;top:631.00px" width="10" height="10" viewBox="-5 -5 10 10"><path d="M0 -3.3 V3.3 M-3.4 -1.7 L3.4 1.7 M-3.4 1.7 L3.4 -1.7" stroke="#303040" stroke-width="0.9"/></svg>
<div id="t51" class="t" style="left:71.66px;top:632.47px;font-size:14px;line-height:14px;font-weight:400;color:#000;transform:scaleX(1.0142);transform-origin:0 0;">Frete por conta :</div>
<div style="position:absolute;left:180px;top:627px;width:117px;height:23px;background:#fff;border:1px solid #a3a3a3;box-sizing:border-box"></div>
<div style="position:absolute;left:274px;top:630px;width:19px;height:17px;background:#ececec;border-top:1px solid #fff;border-left:1px solid #fff;border-right:1px solid #a8a8a8;border-bottom:1px solid #a8a8a8;box-sizing:border-box"></div>
<svg style="position:absolute;left:274px;top:630px" width="19" height="17" viewBox="0 0 19 17"><polygon points="4.9,5.9 14.1,5.9 9.5,11.3" fill="#000"/></svg>
<div id="t52" class="t" style="left:79.56px;top:665.97px;font-size:14px;line-height:14px;font-weight:400;color:#000;transform:scaleX(1.0113);transform-origin:0 0;">Transportador :</div>
<div style="position:absolute;left:180px;top:660px;width:117px;height:24px;background:#fff;border:1px solid #a3a3a3;box-sizing:border-box"></div>
<svg style="position:absolute;left:304px;top:664px" width="22" height="18" viewBox="0 0 22 18"><g transform="scale(0.96,0.9)">
<path d="M1.3 9.9 L12.3 17.6 L22.3 8.3" stroke="#0000ff" stroke-width="1.7" fill="none" stroke-linejoin="round"/>
<path d="M1.2 8.8 L9.3 1 L13.2 1.9 L14.2 3.4 L22 7.8 L12.3 16.6 Z" fill="#fff" stroke="#000" stroke-width="1.05" stroke-linejoin="round"/>
<path d="M14 3.6 L6.6 11.6 M13.2 14.8 L20.6 7.4" stroke="#000" stroke-width="0.8" fill="none"/>
<path d="M1.2 8.8 L1.3 9.9 L12.3 17.3 L22.2 8.3 L22 7.8" stroke="#000" stroke-width="0.8" fill="none"/>
</g></svg>
<div style="position:absolute;left:333px;top:659px;width:526px;height:24px;background:#5f7993;border:1px solid #888;box-sizing:border-box"></div>
<svg style="position:absolute;left:97.10px;top:699.50px" width="10" height="10" viewBox="-5 -5 10 10"><path d="M0 -3.3 V3.3 M-3.4 -1.7 L3.4 1.7 M-3.4 1.7 L3.4 -1.7" stroke="#303040" stroke-width="0.9"/></svg>
<div id="t53" class="t" style="left:106.76px;top:700.97px;font-size:14px;line-height:14px;font-weight:400;color:#000;transform:scaleX(1.0087);transform-origin:0 0;">Categoria :</div>
<div style="position:absolute;left:180px;top:695px;width:117px;height:24px;background:#fff;border:1px solid #a3a3a3;box-sizing:border-box"></div>
<svg style="position:absolute;left:304px;top:699px" width="22" height="18" viewBox="0 0 22 18"><g transform="scale(0.96,0.9)">
<path d="M1.3 9.9 L12.3 17.6 L22.3 8.3" stroke="#0000ff" stroke-width="1.7" fill="none" stroke-linejoin="round"/>
<path d="M1.2 8.8 L9.3 1 L13.2 1.9 L14.2 3.4 L22 7.8 L12.3 16.6 Z" fill="#fff" stroke="#000" stroke-width="1.05" stroke-linejoin="round"/>
<path d="M14 3.6 L6.6 11.6 M13.2 14.8 L20.6 7.4" stroke="#000" stroke-width="0.8" fill="none"/>
<path d="M1.2 8.8 L1.3 9.9 L12.3 17.3 L22.2 8.3 L22 7.8" stroke="#000" stroke-width="0.8" fill="none"/>
</g></svg>
<div style="position:absolute;left:333px;top:695px;width:526px;height:24px;background:#5f7993;border:1px solid #888;box-sizing:border-box"></div>
<div id="t54" class="t" style="left:75.76px;top:783.57px;font-size:14px;line-height:14px;font-weight:400;color:#000;transform:scaleX(0.9837);transform-origin:0 0;">Número Fatura :</div>
<div style="position:absolute;left:180px;top:778px;width:97px;height:23px;background:#fff;border:1px solid #a3a3a3;box-sizing:border-box"></div>
<div id="t55" class="t" style="left:353.16px;top:783.57px;font-size:14px;line-height:14px;font-weight:400;color:#000;transform:scaleX(1.0335);transform-origin:0 0;">Dt. Fatura :</div>
<div style="position:absolute;left:430px;top:778px;width:82px;height:23px;background:#fff;border:1px solid #a3a3a3;box-sizing:border-box"></div>
<div id="t56" class="t" style="left:433.66px;top:782.17px;font-size:14px;line-height:14px;font-weight:400;color:#222;transform:scaleX(1.0157);transform-origin:0 0;">__/__/____</div>
<svg style="position:absolute;left:517px;top:782px" width="17" height="14" viewBox="0 0 17 14"><g transform="scale(0.94,0.93)">
<rect x="0.75" y="0.75" width="15.5" height="13" fill="#ffff00" stroke="#000" stroke-width="1.5"/>
<path d="M1.8 5.2 L4.8 2.6 L4.8 11.8" stroke="#0000ee" stroke-width="1.7" fill="none"/>
<rect x="6.6" y="2.6" width="3.8" height="3.8" fill="#f00"/><rect x="6.6" y="8" width="3.8" height="3.8" fill="#f00"/>
<line x1="8.5" y1="1.2" x2="8.5" y2="13.2" stroke="#000" stroke-width="1"/>
<path d="M11.3 4.4 Q12.8 2.6 14.6 3.8 Q15.4 6 11.6 10.8 L15.6 10.8" stroke="#0000ee" stroke-width="1.6" fill="none"/>
</g></svg>
<div id="t57" class="t" style="left:678.46px;top:783.57px;font-size:14px;line-height:14px;font-weight:400;color:#000;transform:scaleX(1.0265);transform-origin:0 0;">Vlr. Fatura :</div>
<div style="position:absolute;left:757px;top:778px;width:101px;height:24px;background:#fff;border:1px solid #a3a3a3;box-sizing:border-box"></div>
<div style="position:absolute;left:181px;top:849px;width:15px;height:15px;background:#a6a6a6"></div>
<div id="t58" class="t" style="left:202.66px;top:850.47px;font-size:14px;line-height:14px;font-weight:400;color:#000;transform:scaleX(0.9861);transform-origin:0 0;">Emite A.P.</div>
<div style="position:absolute;left:296px;top:849px;width:15px;height:15px;background:#a6a6a6"></div>
<div id="t59" class="t" style="left:317.16px;top:850.47px;font-size:14px;line-height:14px;font-weight:400;color:#000;transform:scaleX(0.9491);transform-origin:0 0;">Emite Ficha de Conferência</div>
<div style="position:absolute;left:509px;top:849px;width:15px;height:15px;background:#a6a6a6"></div>
<div id="t60" class="t" style="left:530.06px;top:850.47px;font-size:14px;line-height:14px;font-weight:400;color:#000;transform:scaleX(0.9511);transform-origin:0 0;">Emite Ficha de Autorização</div>
<div style="position:absolute;left:728px;top:892px;width:75px;height:24px;background:#dcdcdc;border-radius:2px"></div>
<div style="position:absolute;left:729px;top:893px;width:73px;height:22px;background:linear-gradient(#ffffff,#f6f6fb 40%,#d2d3e8);border:1px solid #1e5b8c;border-radius:3px;box-sizing:border-box"></div>
<div id="t61" class="t" style="left:736.82px;top:897.47px;font-size:13px;line-height:13px;font-weight:400;color:#000;transform:scaleX(1.0324);transform-origin:0 0;">Confirma</div>
<div style="position:absolute;left:808px;top:892px;width:75px;height:24px;background:#dcdcdc;border-radius:2px"></div>
<div style="position:absolute;left:809px;top:893px;width:73px;height:22px;background:linear-gradient(#ffffff,#f6f6fb 40%,#d2d3e8);border:1px solid #1e5b8c;border-radius:3px;box-sizing:border-box"></div>
<div id="t62" class="t" style="left:820.22px;top:897.47px;font-size:13px;line-height:13px;font-weight:400;color:#000;transform:scaleX(1.0138);transform-origin:0 0;">Cancela</div>
</body></html>
